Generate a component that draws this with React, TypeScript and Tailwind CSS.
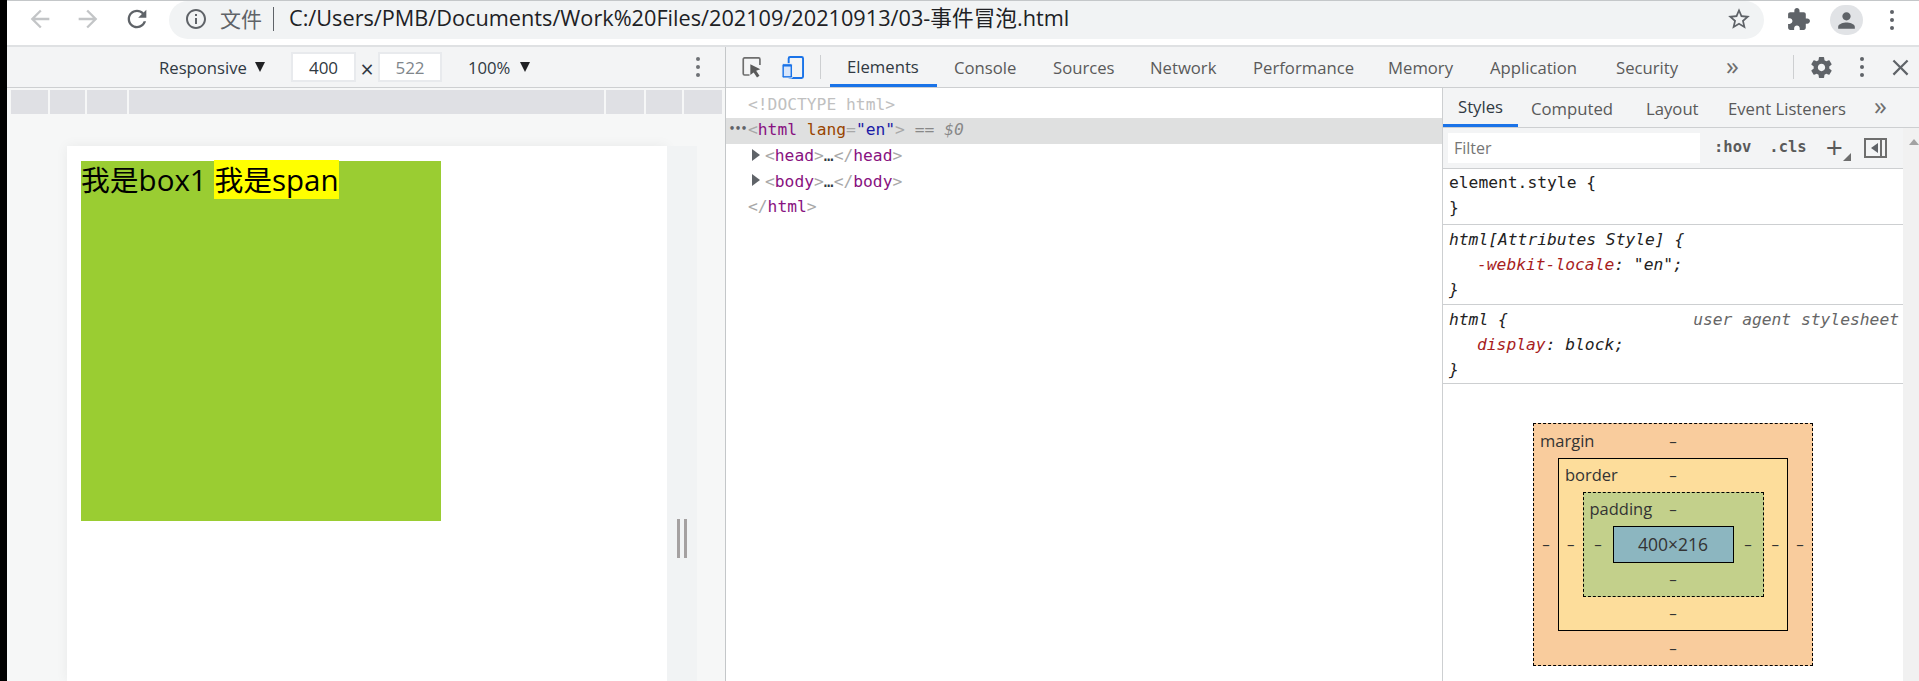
import React from 'react';

const sans = 'font-["Open_Sans","Noto_Sans_CJK_SC",sans-serif]';
const mono = 'font-["DejaVu_Sans_Mono","Liberation_Mono",monospace]';

function MaterialIcon({ d, className }: { d: string; className: string }) {
  return (
    <svg viewBox="0 0 24 24" fill="currentColor" className={className}>
      <path d={d} />
    </svg>
  );
}

function Dots({ className }: { className: string }) {
  return (
    <div className={`flex flex-col items-center gap-[4px] ${className}`}>
      <span className="w-[4px] h-[4px] rounded-full bg-current" />
      <span className="w-[4px] h-[4px] rounded-full bg-current" />
      <span className="w-[4px] h-[4px] rounded-full bg-current" />
    </div>
  );
}

const icons = {
  back: 'M20 11H7.83l5.59-5.59L12 4l-8 8 8 8 1.41-1.41L7.83 13H20v-2z',
  forward: 'M4 11h12.17l-5.59-5.59L12 4l8 8-8 8-1.41-1.41L16.17 13H4v-2z',
  reload:
    'M17.65 6.35C16.2 4.9 14.21 4 12 4c-4.42 0-7.99 3.58-7.99 8s3.57 8 7.99 8c3.73 0 6.84-2.55 7.73-6h-2.08c-.82 2.33-3.04 4-5.65 4-3.31 0-6-2.69-6-6s2.69-6 6-6c1.66 0 3.14.69 4.22 1.78L13 11h7V4l-2.35 2.35z',
  info: 'M11 7h2v2h-2zm0 4h2v6h-2zm1-9C6.48 2 2 6.48 2 12s4.48 10 10 10 10-4.48 10-10S17.52 2 12 2zm0 18c-4.41 0-8-3.59-8-8s3.59-8 8-8 8 3.59 8 8-3.59 8-8 8z',
  star: 'M22 9.24l-7.19-.62L12 2 9.19 8.63 2 9.24l5.46 4.73L5.82 21 12 17.27 18.18 21l-1.63-7.03L22 9.24zM12 15.4l-3.76 2.27 1-4.28-3.32-2.88 4.38-.38L12 6.1l1.71 4.04 4.38.38-3.32 2.88 1 4.28L12 15.4z',
  puzzle:
    'M20.5 11H19V7c0-1.1-.9-2-2-2h-4V3.5C13 2.12 11.88 1 10.5 1S8 2.12 8 3.5V5H4c-1.1 0-1.99.9-1.99 2v3.8H3.5c1.49 0 2.7 1.21 2.7 2.7s-1.21 2.7-2.7 2.7H2V20c0 1.1.9 2 2 2h3.8v-1.5c0-1.49 1.21-2.7 2.7-2.7 1.49 0 2.7 1.21 2.7 2.7V22H17c1.1 0 2-.9 2-2v-4h1.5c1.38 0 2.5-1.12 2.5-2.5S21.88 11 20.5 11z',
  person: 'M12 12c2.21 0 4-1.79 4-4s-1.79-4-4-4-4 1.79-4 4 1.79 4 4 4zm0 2c-2.67 0-8 1.34-8 4v2h16v-2c0-2.66-5.33-4-8-4z',
  gear: 'M19.43 12.98c.04-.32.07-.64.07-.98s-.03-.66-.07-.98l2.11-1.65c.19-.15.24-.42.12-.64l-2-3.46c-.12-.22-.39-.3-.61-.22l-2.49 1c-.52-.4-1.08-.73-1.69-.98l-.38-2.65C14.46 2.18 14.25 2 14 2h-4c-.25 0-.46.18-.49.42l-.38 2.65c-.61.25-1.17.59-1.69.98l-2.49-1c-.23-.09-.49 0-.61.22l-2 3.46c-.13.22-.07.49.12.64l2.11 1.65c-.04.32-.07.65-.07.98s.03.66.07.98l-2.11 1.65c-.19.15-.24.42-.12.64l2 3.46c.12.22.39.3.61.22l2.49-1c.52.4 1.08.73 1.69.98l.38 2.65c.03.24.24.42.49.42h4c.25 0 .46-.18.49-.42l.38-2.65c.61-.25 1.17-.59 1.69-.98l2.49 1c.23.09.49 0 .61-.22l2-3.46c.12-.22.07-.49-.12-.64l-2.11-1.65zM12 15.500c-1.93 0-3.5-1.57-3.5-3.5s1.57-3.5 3.5-3.5 3.5 1.57 3.5 3.5-1.57 3.5-3.5 3.5z',
  close: 'M19 6.41L17.59 5 12 10.59 6.41 5 5 6.41 10.59 12 5 17.59 6.41 19 12 13.41 17.59 19 19 17.59 13.41 12z',
};

function BrowserBar() {
  return (
    <div className="h-[47px] shrink-0 bg-white border-t border-[#c4c7c9] border-b-2 border-b-[#dfe1e3] flex items-start">
      <MaterialIcon d={icons.back} className="w-[28px] h-[28px] ml-[19px] mt-[4px] text-[#c3c5c7]" />
      <MaterialIcon d={icons.forward} className="w-[28px] h-[28px] ml-[20px] mt-[4px] text-[#c3c5c7]" />
      <MaterialIcon d={icons.reload} className="w-[28px] h-[28px] ml-[21px] mt-[4px] text-[#5f6368]" />
      <div className={`ml-[18px] w-[1595px] h-[38px] pb-[2px] rounded-full bg-[#f1f3f4] flex items-center ${sans}`}>
        <MaterialIcon d={icons.info} className="w-[24px] h-[24px] ml-[15px] text-[#5f6368]" />
        <span className="ml-[12px] text-[21px] text-[#5f6368] leading-none">文件</span>
        <span className="ml-[11px] w-px h-[24px] bg-[#5f6368]" />
        <span className="ml-[15px] -mt-[2px] text-[21.700px] text-[#202124] whitespace-nowrap">
          C:/Users/PMB/Documents/Work%20Files/202109/20210913/03-事件冒泡.html
        </span>
        <MaterialIcon d={icons.star} className="w-[26px] h-[26px] ml-auto mr-[12px] text-[#5f6368]" />
      </div>
      <MaterialIcon d={icons.puzzle} className="w-[25px] h-[25px] ml-[22px] mt-[6px] text-[#5f6368]" />
      <div className="ml-[19px] mt-[4px] w-[33px] h-[30px] rounded-full bg-[#e1e3e6] flex items-center justify-center">
        <MaterialIcon d={icons.person} className="w-[25px] h-[25px] text-[#5f6368]" />
      </div>
      <Dots className="ml-[27px] mt-[9px] text-[#5f6368]" />
    </div>
  );
}

function Caret({ className }: { className: string }) {
  return <span className={`w-0 h-0 border-x-[5px] border-x-transparent border-t-[10px] border-t-[#202124] ${className}`} />;
}

function DevicePane() {
  const size = 'h-[30px] pt-[1px] bg-white border-2 border-[#e8eaed] flex items-center justify-center text-[17px]';
  return (
    <div className="w-[719px] shrink-0 border-r border-[#c4c7c9] flex flex-col bg-[#f6f7f7]">
      <div className={`h-[41px] shrink-0 border-b border-[#cdcfd1] bg-[#f3f4f5] flex items-center text-[#303942] text-[16.700px] ${sans}`}>
        <span className="ml-[152px] w-[88px] mt-[2px]">Responsive</span>
        <Caret className="ml-[8px] -mt-[1px]" />
        <div className={`ml-[26px] w-[65px] ${size}`}>400</div>
        <span className="w-[22px] text-center text-[23px] mt-[4px]">×</span>
        <div className={`w-[64px] text-[#80868b] ${size}`}>522</div>
        <span className="ml-[26px] w-[43px] mt-[2px]">100%</span>
        <Caret className="ml-[9px] -mt-[1px]" />
        <Dots className="ml-[166px] text-[#6e7175]" />
      </div>
      <div className="ml-[4px] mt-[2px] w-[711px] h-[24px] shrink-0 bg-[#dfe0e4] flex">
        <span className="ml-[37px] w-[2px] bg-[#f6f7f7]" />
        <span className="ml-[35px] w-[2px] bg-[#f6f7f7]" />
        <span className="ml-[40px] w-[2px] bg-[#f6f7f7]" />
        <span className="ml-[475px] w-[2px] bg-[#f6f7f7]" />
        <span className="ml-[38px] w-[2px] bg-[#f6f7f7]" />
        <span className="ml-[36px] w-[2px] bg-[#f6f7f7]" />
      </div>
      <div className="mt-[32px] ml-[60px] flex flex-1 min-h-0">
        <div className="w-[600px] bg-white pl-[14px] pt-[15px] shadow-[0_0_12px_rgba(0,0,0,0.06)]">
          <div className={`w-[360px] h-[360px] bg-[#9acd32] text-[28.800px] leading-[38px] text-black whitespace-nowrap ${sans}`}>
            我是<span className="text-[29.500px]">box1 </span>
            <span className="bg-[#ffff00]">
              我是<span className="text-[29.500px]">span</span>
            </span>
          </div>
        </div>
        <div className="w-[30px] bg-[#f1f3f4] pt-[373px] pl-[10px]">
          <div className="w-[10px] h-[39px] border-x-[3px] border-[#a5a1a1] bg-[#f1f3f4]" />
        </div>
      </div>
    </div>
  );
}

const mainTabs = [
  { label: 'Console', w: 'w-[99px]' },
  { label: 'Sources', w: 'w-[97px]' },
  { label: 'Network', w: 'w-[103px]' },
  { label: 'Performance', w: 'w-[135px]' },
  { label: 'Memory', w: 'w-[102px]' },
  { label: 'Application', w: 'w-[126px]' },
  { label: 'Security', w: 'w-[108px]' },
];

function ElementsToolbar() {
  return (
    <div className={`h-[41px] shrink-0 border-b border-[#cdcfd1] bg-[#f3f4f5] flex items-center text-[#5a5a5a] text-[16.700px] ${sans}`}>
      <svg viewBox="0 0 24 26" className="ml-[16px] w-[20px] h-[23px] shrink-0" fill="none">
        <path d="M9 22H3a1.5 1.5 0 0 1-1.5-1.5V3A1.5 1.5 0 0 1 3 1.5h17A1.5 1.5 0 0 1 21.500 3v7" stroke="#6e6e6e" strokeWidth="2" />
        <path d="M10 9l12 6-5 2 4 6-3 2-4-6-4 3z" fill="#5a5a5a" />
      </svg>
      <svg viewBox="0 0 24 24" className="ml-[19px] w-[23px] h-[25px] shrink-0" fill="none">
        <rect x="8" y="1" width="15" height="22" rx="1.500" stroke="#1a73e8" strokeWidth="2" />
        <rect x="1" y="8" width="11" height="15" rx="1.500" fill="#1a73e8" stroke="#f3f4f5" strokeWidth="1" />
        <rect x="3" y="11" width="7" height="10" fill="#d8e6fb" />
      </svg>
      <span className="ml-[16px] w-px h-[24px] bg-[#cdcfd1] shrink-0" />
      <div className="ml-[9px] w-[107px] h-full pl-[17px] pt-[2px] flex items-center border-b-[3px] border-[#1a73e8] text-[#303942] shrink-0">Elements</div>
      {mainTabs.map((tab) => (
        <span key={tab.label} className={`${tab.w} pl-[17px] mt-[2px] shrink-0`}>
          {tab.label}
        </span>
      ))}
      <span className="ml-[19px] w-[16px] text-[26px] leading-none text-[#6e6e6e] -mt-[5px]">»</span>
      <span className="ml-[51px] w-px h-[24px] bg-[#cdcfd1]" />
      <MaterialIcon d={icons.gear} className="ml-[15px] w-[25px] h-[25px] text-[#5f6368]" />
      <Dots className="ml-[26px] text-[#5f6368]" />
      <MaterialIcon d={icons.close} className="ml-[23px] w-[27px] h-[27px] text-[#5f6368]" />
    </div>
  );
}

const Bracket = ({ children }: { children: React.ReactNode }) => <span className="text-[#a8a8a8]">{children}</span>;
const Tag = ({ children }: { children: React.ReactNode }) => <span className="text-[#881280]">{children}</span>;

function Triangle() {
  return <span className="w-0 h-0 border-y-[6px] border-y-transparent border-l-[8px] border-l-[#5f6368] ml-[26px] mr-[5px] -mt-[3px]" />;
}

function DomTree() {
  const row = 'h-[25.500px] flex items-center whitespace-pre';
  return (
    <div className={`flex-1 min-w-0 pt-[4px] bg-white text-[16.300px] ${mono}`}>
      <div className={`${row} pl-[22px] text-[#c0c0c0]`}>{'<!DOCTYPE html>'}</div>
      <div className={`${row} h-[26px] bg-[#dfe0e0] pl-[3px]`}>
        <span className="text-[#5f6368] w-[19px] text-[10px] font-bold leading-none -mt-[3px]">•••</span>
        <Bracket>{'<'}</Bracket>
        <Tag>html</Tag>
        <span> </span>
        <span className="text-[#994500]">lang</span>
        <Bracket>=</Bracket>
        <span className="text-[#1a1aa6]">"en"</span>
        <Bracket>{'>'}</Bracket>
        <span className="text-[#888888]"> == <i>$0</i></span>
      </div>
      <div className={row}>
        <Triangle />
        <Bracket>{'<'}</Bracket>
        <Tag>head</Tag>
        <Bracket>{'>'}</Bracket>
        <span className="text-[#303942]">…</span>
        <Bracket>{'</'}</Bracket>
        <Tag>head</Tag>
        <Bracket>{'>'}</Bracket>
      </div>
      <div className={row}>
        <Triangle />
        <Bracket>{'<'}</Bracket>
        <Tag>body</Tag>
        <Bracket>{'>'}</Bracket>
        <span className="text-[#303942]">…</span>
        <Bracket>{'</'}</Bracket>
        <Tag>body</Tag>
        <Bracket>{'>'}</Bracket>
      </div>
      <div className={`${row} pl-[22px]`}>
        <Bracket>{'</'}</Bracket>
        <Tag>html</Tag>
        <Bracket>{'>'}</Bracket>
      </div>
    </div>
  );
}

function BoxLayer({
  label,
  tone,
  line,
  className,
  padTop,
  padSide,
  padBottom,
  children,
}: {
  label: string;
  tone: string;
  line: string;
  className: string;
  padTop: string;
  padSide: string;
  padBottom: string;
  children: React.ReactNode;
}) {
  return (
    <div className={`${tone} ${line} ${className} border border-black flex flex-col`}>
      <div className={`${padTop} relative flex items-center justify-center`}>
        <span className="absolute left-[6px] text-[16.500px] text-[#333]">{label}</span>
        <span className="text-[#333]">–</span>
      </div>
      <div className="flex items-center">
        <span className={`${padSide} text-center text-[#333]`}>–</span>
        {children}
        <span className={`${padSide} text-center text-[#333]`}>–</span>
      </div>
      <div className={`${padBottom} flex items-center justify-center text-[#333]`}>–</div>
    </div>
  );
}

function BoxModel() {
  return (
    <div className={`pt-[39px] pl-[90px] text-[15px] ${sans}`}>
      <BoxLayer label="margin" tone="bg-[#f9cc9d]" line="border-dashed" className="w-[280px] h-[243px]" padTop="h-[34px]" padSide="w-[24px]" padBottom="h-[34px]">
        <BoxLayer label="border" tone="bg-[#fddd9b]" line="border-solid" className="w-[230px] h-[173px]" padTop="h-[33px]" padSide="w-[24px]" padBottom="h-[33px]">
          <BoxLayer label="padding" tone="bg-[#c3d08b]" line="border-dashed" className="w-[181px] h-[105px]" padTop="h-[33px]" padSide="w-[29px]" padBottom="h-[32px]">
            <div className="w-[121px] h-[37px] border border-black bg-[#8cb6c0] flex items-center justify-center text-[17.500px] text-[#333]">400×216</div>
          </BoxLayer>
        </BoxLayer>
      </BoxLayer>
    </div>
  );
}

function StylesSidebar() {
  const subTabs = 'shrink-0 mt-[2px] text-[#5a5a5a]';
  const line = 'h-[25px] flex items-center whitespace-pre';
  return (
    <div className="w-[477px] shrink-0 border-l border-[#cdcfd1] flex flex-col min-h-0">
      <div className={`h-[40px] shrink-0 bg-[#f3f4f5] border-b border-[#cdcfd1] flex items-center text-[16.700px] ${sans}`}>
        <div className="w-[75px] h-full pl-[15px] pt-[2px] flex items-center border-b-[3px] border-[#1a73e8] text-[#303942] shrink-0">Styles</div>
        <span className={`${subTabs} ml-[13px] w-[115px]`}>Computed</span>
        <span className={`${subTabs} w-[82px]`}>Layout</span>
        <span className={`${subTabs} w-[146px]`}>Event Listeners</span>
        <span className="text-[26px] leading-none text-[#6e6e6e] -mt-[5px]">»</span>
      </div>
      <div className="flex flex-1 min-h-0">
        <div className="flex-1 min-w-0">
          <div className={`h-[41px] bg-[#f3f4f5] border-b border-[#cdcfd1] flex items-center ${sans}`}>
            <div className="ml-[5px] w-[252px] h-[30px] bg-white pl-[6px] flex items-center text-[16px] text-[#757575]">Filter</div>
            <span className={`ml-[14px] text-[15.500px] font-bold text-[#5a5a5a] ${mono}`}>:hov</span>
            <span className={`ml-[18px] text-[15.500px] font-bold text-[#5a5a5a] ${mono}`}>.cls</span>
            <span className="ml-[19px] text-[30px] leading-none text-[#5a5a5a] -mt-[2px]">+</span>
            <span className="w-0 h-0 mt-[17px] border-b-[8px] border-l-[8px] border-l-transparent border-b-[#6e6e6e]" />
            <div className="ml-[13px] w-[23px] h-[20px] border-2 border-[#6e6e6e] flex items-center justify-end">
              <span className="w-0 h-0 border-y-[5px] border-y-transparent border-r-[7px] border-r-[#5f6368] mr-[2px]" />
              <span className="w-[2px] h-full bg-[#6e6e6e] mr-[3px]" />
            </div>
          </div>
          <div className={`text-[16.300px] text-[#222] ${mono}`}>
            <div className="h-[56px] pt-[2px] border-b border-[#cdcfd1] pl-[6px]">
              <div className={line}>element.style {'{'}</div>
              <div className={line}>{'}'}</div>
            </div>
            <div className="h-[80px] pt-[3px] border-b border-[#cdcfd1] pl-[6px] italic">
              <div className={line}>html[Attributes Style] {'{'}</div>
              <div className={`${line} pl-[28px]`}>
                <span className="text-[#a71d1d]">-webkit-locale</span>: "en";
              </div>
              <div className={line}>{'}'}</div>
            </div>
            <div className="h-[79px] pt-[3px] border-b border-[#cdcfd1] pl-[6px] italic">
              <div className={`${line} justify-between pr-[4px]`}>
                <span>html {'{'}</span>
                <span className="text-[#666]">user agent stylesheet</span>
              </div>
              <div className={`${line} pl-[28px]`}>
                <span className="text-[#a71d1d]">display</span>: block;
              </div>
              <div className={line}>{'}'}</div>
            </div>
          </div>
          <BoxModel />
        </div>
        <div className="w-[16px] shrink-0 bg-[#f1f1f1] pt-[11px] flex justify-end">
          <span className="w-0 h-0 border-x-[5px] border-x-transparent border-b-[6px] border-b-[#a3a3a3]" />
        </div>
      </div>
    </div>
  );
}

export default function App() {
  return (
    <div className="w-[1919px] h-[681px] overflow-hidden flex bg-white">
      <div className="w-[7px] shrink-0 bg-black" />
      <div className="flex-1 min-w-0 flex flex-col">
        <BrowserBar />
        <div className="flex flex-1 min-h-0">
          <DevicePane />
          <div className="flex-1 min-w-0 flex flex-col">
            <ElementsToolbar />
            <div className="flex flex-1 min-h-0">
              <DomTree />
              <StylesSidebar />
            </div>
          </div>
        </div>
      </div>
    </div>
  );
}
